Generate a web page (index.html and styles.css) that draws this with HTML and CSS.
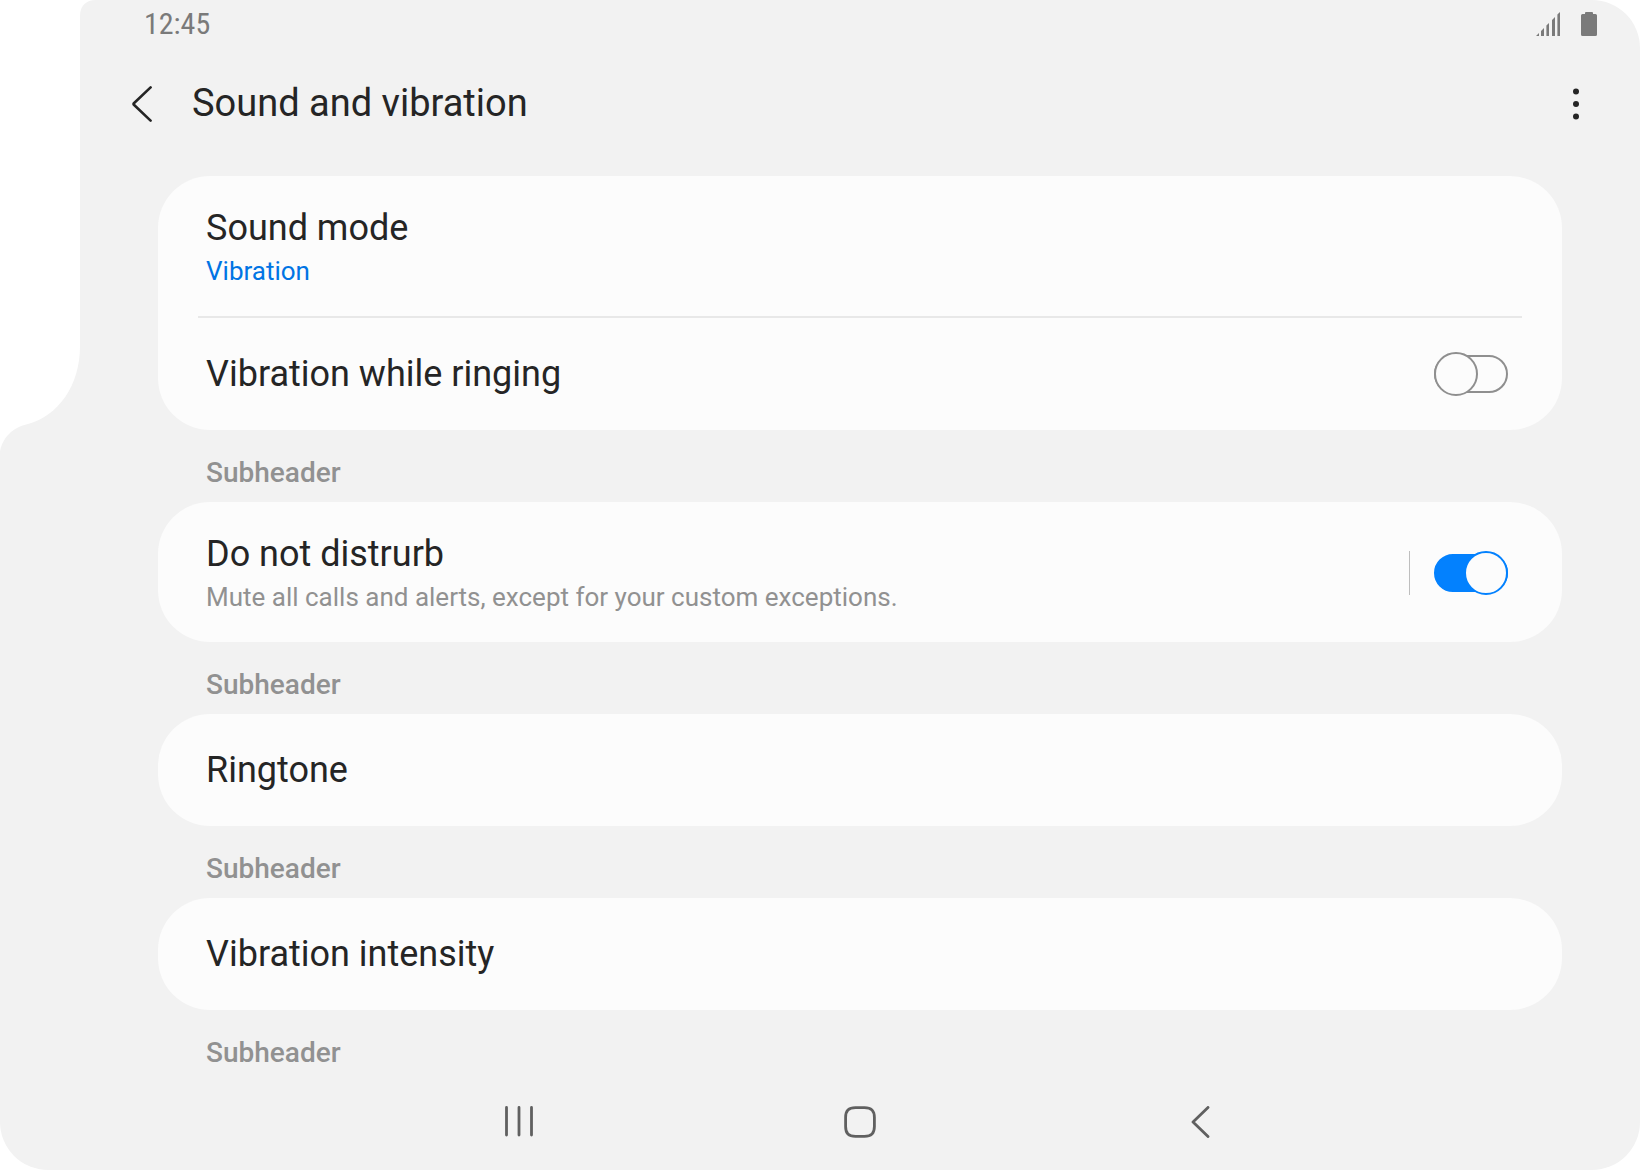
FILE: index.html
```html
<!DOCTYPE html>
<html lang="en">
<head>
<meta charset="utf-8">
<meta name="viewport" content="width=device-width, initial-scale=1">
<title>Sound and vibration</title>
<link rel="stylesheet" href="styles.css">
</head>
<body>
<div class="screen">
  <svg class="cutout" viewBox="0 0 96 452" aria-hidden="true">
    <path d="M0 0H96C86 0 80 6 80 16V346C80 386 58 416 28 424C13 427 2 438 0 452Z" fill="#fff"/>
  </svg>

  <div class="status-bar">
    <time class="clock">12:45</time>
    <div class="status-icons">
      <svg width="24" height="24" viewBox="0 0 24 24" fill="#7a7a7a" aria-hidden="true">
        <path d="M0 24L3 21V24ZM5 19L8 16V24H5ZM10.400 13.600L13 11V24H10.400ZM16 8L19 5V24H16ZM21.400 2.600L24 0V24H21.400Z"/>
      </svg>
      <svg width="16" height="24" viewBox="0 0 16 24" fill="#7a7a7a" aria-hidden="true">
        <path d="M5 0H11Q12 0 12 1V2H14.500Q16 2 16 3.500V22.500Q16 24 14.500 24H1.500Q0 24 0 22.500V3.500Q0 2 1.500 2H4V1Q4 0 5 0Z"/>
      </svg>
    </div>
  </div>

  <header class="app-bar">
    <button class="icon-button" type="button" aria-label="Navigate up">
      <svg width="20" height="36" viewBox="0 0 20 36" fill="none" stroke="#252525" stroke-width="2.600" stroke-linecap="round" stroke-linejoin="round" aria-hidden="true">
        <path d="M18.600 1.400L1.900 17.200Q1.100 18 1.900 18.800L18.600 34.600"/>
      </svg>
    </button>
    <h1 class="page-title">Sound and vibration</h1>
    <button class="icon-button" type="button" aria-label="More options">
      <svg width="8" height="32" viewBox="0 0 8 32" fill="#252525" aria-hidden="true">
        <circle cx="4" cy="3.500" r="3"/><circle cx="4" cy="16" r="3"/><circle cx="4" cy="28.500" r="3"/>
      </svg>
    </button>
  </header>

  <main class="settings">
    <section class="card">
      <button class="row row-tall" type="button">
        <span class="row-text">
          <span class="row-title">Sound mode</span>
          <span class="row-note row-value">Vibration</span>
        </span>
      </button>
      <hr class="divider">
      <div class="row">
        <label class="row-title" for="ring-vibration">Vibration while ringing</label>
        <input class="switch" type="checkbox" role="switch" id="ring-vibration">
      </div>
    </section>

    <h2 class="subheader">Subheader</h2>
    <section class="card">
      <div class="row row-tall">
        <div class="row-text">
          <label class="row-title" for="dnd">Do not distrurb</label>
          <span class="row-note">Mute all calls and alerts, except for your custom exceptions.</span>
        </div>
        <div class="switch-group">
          <input class="switch" type="checkbox" role="switch" id="dnd" checked>
        </div>
      </div>
    </section>

    <h2 class="subheader">Subheader</h2>
    <section class="card">
      <button class="row" type="button"><span class="row-title">Ringtone</span></button>
    </section>

    <h2 class="subheader">Subheader</h2>
    <section class="card">
      <button class="row" type="button"><span class="row-title">Vibration intensity</span></button>
    </section>

    <h2 class="subheader">Subheader</h2>
  </main>

  <nav class="nav-bar" aria-label="System">
    <button class="nav-button" type="button" aria-label="Recent apps">
      <svg width="32" height="32" viewBox="0 0 32 32" fill="none" stroke="#606060" stroke-width="2.800" stroke-linecap="round" aria-hidden="true">
        <path d="M3.500 1.400V29M16 1.400V29M28.500 1.400V29"/>
      </svg>
    </button>
    <button class="nav-button" type="button" aria-label="Home">
      <svg width="32" height="32" viewBox="0 0 32 32" fill="none" stroke="#606060" stroke-width="2.800" aria-hidden="true">
        <path d="M11.500 1.600H20.500C27.500 1.600 30.400 4.500 30.400 11.500V20.500C30.400 27.500 27.500 30.400 20.500 30.400H11.500C4.500 30.400 1.600 27.500 1.600 20.500V11.500C1.600 4.500 4.500 1.600 11.500 1.600Z"/>
      </svg>
    </button>
    <button class="nav-button" type="button" aria-label="Back">
      <svg width="32" height="32" viewBox="0 0 32 32" fill="none" stroke="#606060" stroke-width="2.800" stroke-linecap="round" stroke-linejoin="round" aria-hidden="true">
        <path d="M23 1.400L8 16L23 30.600"/>
      </svg>
    </button>
  </nav>
</div>
</body>
</html>
```
FILE: styles.css
```css
:root {
  --surface: #f2f2f2;
  --card: #fcfcfc;
  --ink: #252525;
  --muted: #919191;
  --accent: #0381fe;
}

* {
  box-sizing: border-box;
}

body {
  margin: 0;
  background: #fff;
  color: var(--ink);
  font-family: Roboto, "Liberation Sans", sans-serif;
}

button {
  border: 0;
  background: none;
  color: inherit;
  font: inherit;
  text-align: left;
  cursor: pointer;
}

svg {
  display: block;
}

/* Unfolded display: the camera notch takes the upper left corner */
.screen {
  position: relative;
  display: flex;
  flex-direction: column;
  min-height: 100vh;
  padding-left: 80px;
  border-radius: 0 48px 48px 48px;
  background: var(--surface);
}

.cutout {
  position: absolute;
  top: 0;
  left: 0;
  width: 96px;
  height: 452px;
}

.status-bar {
  display: flex;
  align-items: center;
  justify-content: space-between;
  height: 48px;
  padding: 0 43px 0 64px;
}

.clock {
  color: #7a7a7a;
  font-family: "Roboto Condensed", Roboto, "Liberation Sans", sans-serif;
  font-size: 30px;
  line-height: 48px;
}

.status-icons {
  display: flex;
  gap: 21px;
}

.app-bar {
  display: flex;
  align-items: center;
  height: 112px;
  padding: 0 40px 0 38px;
}

.icon-button {
  display: grid;
  place-items: center;
  width: 48px;
  height: 64px;
  padding: 0;
}

.page-title {
  flex: 1;
  margin: 0 0 0 26px;
  padding-bottom: 2px;
  font-size: 38px;
  font-weight: 400;
  line-height: 48px;
}

.settings {
  flex: 1;
  padding: 16px 78px 0;
}

.card {
  border-radius: 52px;
  background: var(--card);
}

.row {
  display: flex;
  align-items: center;
  justify-content: space-between;
  width: 100%;
  min-height: 112px;
  padding: 0 54px 0 48px;
}

.row-tall {
  min-height: 140px;
  padding-top: 2px;
}

.row-text {
  display: flex;
  flex-direction: column;
}

.row-title {
  font-size: 36px;
  line-height: 48px;
}

.row-note {
  color: var(--muted);
  font-size: 26px;
  line-height: 38px;
}

.row-value {
  color: #0074e4;
}

.divider {
  height: 2px;
  margin: 0 40px;
  border: 0;
  background: #e8e8e8;
}

.subheader {
  margin: 0;
  padding: 25px 48px 11px;
  color: var(--muted);
  font-size: 28px;
  font-weight: 500;
  line-height: 36px;
}

.switch-group {
  padding-left: 24px;
  border-left: 1px solid #bebebe;
}

.switch {
  display: grid;
  align-items: center;
  flex: none;
  width: 74px;
  height: 44px;
  margin: 0;
  appearance: none;
  cursor: pointer;
}

.switch::before,
.switch::after {
  grid-area: 1 / 1;
  box-sizing: border-box;
  border: 2px solid #8f8f8f;
  border-radius: 22px;
  background: var(--card);
  content: "";
}

.switch::before {
  height: 38px;
}

.switch::after {
  width: 44px;
  height: 44px;
}

.switch:checked::before {
  border-color: var(--accent);
  background: var(--accent);
}

.switch:checked::after {
  justify-self: end;
  border-color: var(--accent);
}

.nav-bar {
  display: grid;
  grid-template-columns: repeat(3, 1fr);
  height: 88px;
  padding: 0 268px 8px;
}

.nav-button {
  display: grid;
  place-items: center;
  padding: 0;
}
```
